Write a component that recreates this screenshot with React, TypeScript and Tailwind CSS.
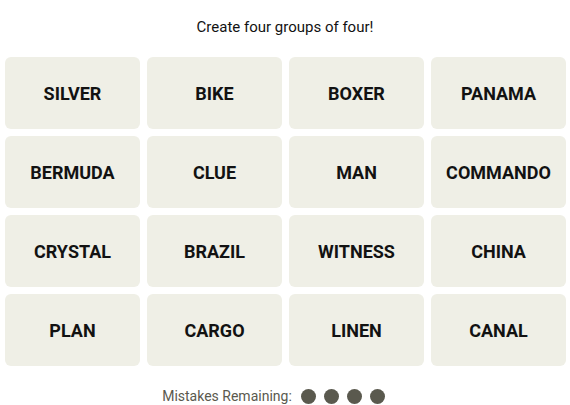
const words = [
  "SILVER", "BIKE", "BOXER", "PANAMA",
  "BERMUDA", "CLUE", "MAN", "COMMANDO",
  "CRYSTAL", "BRAZIL", "WITNESS", "CHINA",
  "PLAN", "CARGO", "LINEN", "CANAL",
];

const App = () => {
  return (
    <div className="w-[570px] h-[405px] bg-white flex flex-col font-['Roboto',sans-serif] text-[#121212] overflow-hidden">
      <p className="mt-[17px] h-[20px] leading-[20px] text-center text-[15px]">
        Create four groups of four!
      </p>

      {/* Board */}
      <div className="mt-[20px] pl-[5px] grid grid-cols-[repeat(4,135px)] gap-[7px]">
        {words.map((word) => (
          <button
            key={word}
            className="h-[72px] rounded-[6px] bg-[#efefe6] flex items-center justify-center text-[18px] font-bold uppercase"
          >
            {word}
          </button>
        ))}
      </div>

      {/* Mistakes */}
      <div className="mt-[20px] h-[20px] flex items-center justify-center pr-[23px] text-[#5a594e]">
        <span className="text-[14px] mr-[9px]">Mistakes Remaining:</span>
        <div className="flex gap-[8px]">
          {[0, 1, 2, 3].map((i) => (
            <span key={i} className="w-[15px] h-[15px] rounded-full bg-[#5a594e]" />
          ))}
        </div>
      </div>
    </div>
  );
};

export default App;
